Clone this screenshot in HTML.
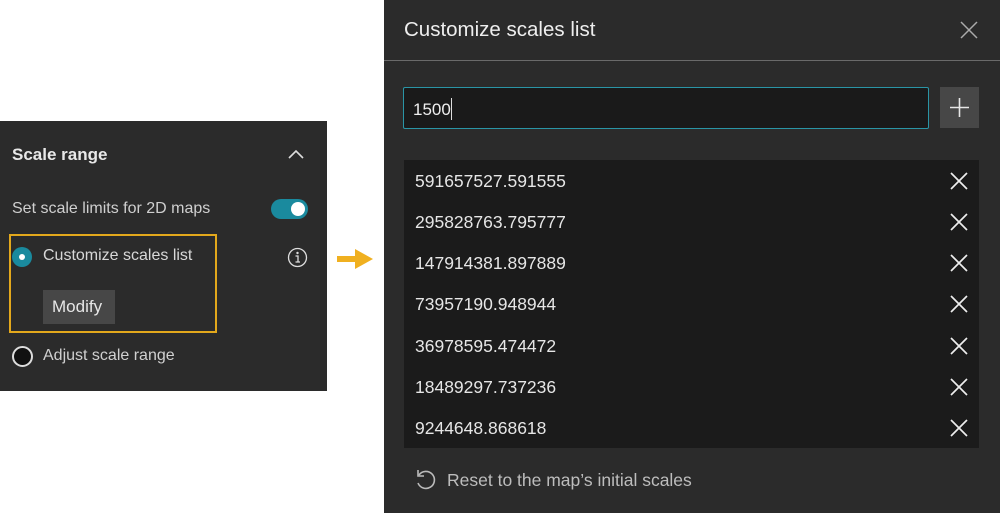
<!DOCTYPE html>
<html><head><meta charset="utf-8"><style>
*{margin:0;padding:0;box-sizing:border-box}
body{width:1000px;height:513px;background:#fff;position:relative;overflow:hidden;font-family:"Liberation Sans",sans-serif;color:#e0e0e0}
.a{position:absolute}
.lp{left:0;top:121px;width:327px;height:270px;background:#2b2b2b}
.rp{left:384px;top:0;width:616px;height:513px;background:#2b2b2b}
.t{font-size:16px;white-space:nowrap}
.row{position:absolute;left:404px;width:575px;height:41px}
.row span{position:absolute;left:11px;top:11px;font-size:17.5px;color:#e6e6e6}
.row svg{position:absolute;right:10px;top:11px}
</style></head><body>
<div class="a lp"></div>
<div class="a t" style="left:12px;top:145px;font-size:17px;font-weight:bold;color:#e8e8e8">Scale range</div>
<svg class="a" style="left:287px;top:148px" width="18" height="12"><path d="M2 10 L9 3 L16 10" stroke="#ddd" stroke-width="1.6" fill="none"/></svg>
<div class="a t" style="left:12px;top:200px;color:#cfcfcf">Set scale limits for 2D maps</div>
<div class="a" style="left:271px;top:199px;width:37px;height:20px;border-radius:10px;background:#1a8a9e"></div>
<div class="a" style="left:291px;top:202px;width:14px;height:14px;border-radius:50%;background:#fff"></div>
<div class="a" style="left:9px;top:234px;width:208px;height:99px;border:2px solid #e3a81c"></div>
<div class="a" style="left:12px;top:247px;width:20px;height:20px;border-radius:50%;background:#1a8a9e"></div>
<div class="a" style="left:19px;top:254px;width:6px;height:6px;border-radius:50%;background:#fff"></div>
<div class="a t" style="left:43px;top:247px;color:#d8d8d8">Customize scales list</div>
<svg class="a" style="left:287px;top:247px" width="21" height="21"><circle cx="10.5" cy="10.5" r="9" stroke="#ddd" stroke-width="1.3" fill="none"/><circle cx="10.5" cy="6" r="1.2" fill="#ddd"/><path d="M8.5 9 H11 V15 M8.5 15 H13" stroke="#ddd" stroke-width="1.3" fill="none"/></svg>
<div class="a" style="left:43px;top:290px;width:72px;height:34px;background:#474747"></div>
<div class="a t" style="left:52px;top:297px;font-size:17px;color:#e6e6e6">Modify</div>
<div class="a" style="left:12px;top:346px;width:21px;height:21px;border-radius:50%;border:2.5px solid #ddd;background:#111"></div>
<div class="a t" style="left:43px;top:347px;color:#d0d0d0">Adjust scale range</div>
<svg class="a" style="left:335px;top:246px" width="40" height="26"><path d="M2 13 H24" stroke="#f0b020" stroke-width="6"/><path d="M20 3 L38 13 L20 23 Z" fill="#f0b020"/></svg>
<div class="a rp"></div>
<div class="a t" style="left:404px;top:18px;font-size:20.5px;color:#eee">Customize scales list</div>
<svg class="a" style="left:959px;top:20px" width="20" height="20"><path d="M2 2 L18 18 M18 2 L2 18" stroke="#aaa" stroke-width="1.5"/></svg>
<div class="a" style="left:384px;top:60px;width:616px;height:1px;background:#6a6a6a"></div>
<div class="a" style="left:403px;top:87px;width:526px;height:42px;background:#1a1a1a;border:1.5px solid #2a95a6;border-radius:2px"></div>
<div class="a t" style="left:413px;top:98px;font-size:17px;color:#eee">1500<span style="display:inline-block;width:1px;height:22px;background:#ddd;vertical-align:-5px"></span></div>
<div class="a" style="left:940px;top:87px;width:39px;height:41px;background:#474747"></div>
<svg class="a" style="left:949px;top:97px" width="21" height="21"><path d="M10.5 1 V20 M1 10.5 H20" stroke="#e6e6e6" stroke-width="1.6"/></svg>
<div class="a" style="left:404px;top:160px;width:575px;height:288px;background:#1b1b1b"></div>
<div class="row" style="top:160px"><span>591657527.591555</span><svg width="20" height="20"><path d="M2 2 L18 18 M18 2 L2 18" stroke="#eee" stroke-width="1.7"/></svg></div>
<div class="row" style="top:201px"><span>295828763.795777</span><svg width="20" height="20"><path d="M2 2 L18 18 M18 2 L2 18" stroke="#eee" stroke-width="1.7"/></svg></div>
<div class="row" style="top:242px"><span>147914381.897889</span><svg width="20" height="20"><path d="M2 2 L18 18 M18 2 L2 18" stroke="#eee" stroke-width="1.7"/></svg></div>
<div class="row" style="top:283px"><span>73957190.948944</span><svg width="20" height="20"><path d="M2 2 L18 18 M18 2 L2 18" stroke="#eee" stroke-width="1.7"/></svg></div>
<div class="row" style="top:325px"><span>36978595.474472</span><svg width="20" height="20"><path d="M2 2 L18 18 M18 2 L2 18" stroke="#eee" stroke-width="1.7"/></svg></div>
<div class="row" style="top:366px"><span>18489297.737236</span><svg width="20" height="20"><path d="M2 2 L18 18 M18 2 L2 18" stroke="#eee" stroke-width="1.7"/></svg></div>
<div class="row" style="top:407px"><span>9244648.868618</span><svg width="20" height="20"><path d="M2 2 L18 18 M18 2 L2 18" stroke="#eee" stroke-width="1.7"/></svg></div>
<svg class="a" style="left:414px;top:468px" width="24" height="24"><path d="M5 7 A8.5 8.5 0 1 1 4 15" stroke="#bbb" stroke-width="1.6" fill="none"/><path d="M4 2 V8 H10" stroke="#bbb" stroke-width="1.6" fill="none"/></svg>
<div class="a t" style="left:447px;top:470px;font-size:17.5px;color:#bdbdbd">Reset to the map’s initial scales</div>
</body></html>
